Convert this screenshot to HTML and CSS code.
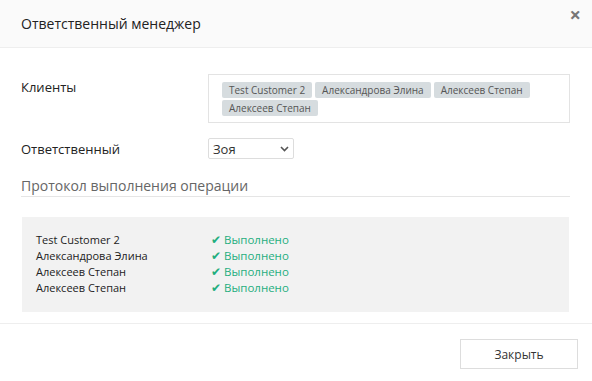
FILE: index.html
```html
<!DOCTYPE html>
<html lang="ru">
<head>
    <meta charset="UTF-8">
    <meta name="viewport" content="width=device-width, initial-scale=1.0">
    <title>Ответственный менеджер</title>
    <link rel="stylesheet" href="styles.css">
</head>
<body>
    <div class="modal">
        <div class="modal-header">
            <h3>Ответственный менеджер</h3>
            <span class="close">&times;</span>
        </div>
        <div class="modal-body">
            <div class="field">
                <label>Клиенты</label>
                <div class="tags">
                    <span class="tag">Test Customer 2</span>
                    <span class="tag">Александрова Элина</span>
                    <span class="tag">Алексеев Степан</span>
                    <span class="tag">Алексеев Степан</span>
                </div>
            </div>
            <div class="field field-select">
                <label>Ответственный</label>
                <div class="select">
                    <span>Зоя</span>
                    <svg width="9" height="6" viewBox="0 0 9 6"><path d="M1 1l3.5 3.5L8 1" fill="none" stroke="#555" stroke-width="1.6"/></svg>
                </div>
            </div>
            <h4 class="section-title">Протокол выполнения операции</h4>
            <div class="log">
                <div class="log-row"><span class="name">Test Customer 2</span><span class="status">&#10004; Выполнено</span></div>
                <div class="log-row"><span class="name">Александрова Элина</span><span class="status">&#10004; Выполнено</span></div>
                <div class="log-row"><span class="name">Алексеев Степан</span><span class="status">&#10004; Выполнено</span></div>
                <div class="log-row"><span class="name">Алексеев Степан</span><span class="status">&#10004; Выполнено</span></div>
            </div>
        </div>
        <div class="modal-footer">
            <button>Закрыть</button>
        </div>
    </div>
</body>
</html>
```

FILE: styles.css
```css
body {
    margin: 0;
    background: #fff;
    font-family: "Open Sans", "Noto Sans", sans-serif;
    color: #333;
}
.modal {
    width: 592px;
}
.modal-header {
    height: 47px;
    padding: 0 11px 0 21px;
    background: #fafafa;
    border-bottom: 1px solid #eee;
    display: flex;
    justify-content: space-between;
    align-items: center;
}
.modal-header h3 {
    margin: 0;
    font-size: 14px;
    font-weight: normal;
    color: #222;
}
.close {
    align-self: flex-start;
    margin-top: 1px;
    font-size: 20px;
    font-weight: bold;
    color: #777;
}
.modal-body {
    padding: 26px 22px 0 21px;
}
.field {
    display: flex;
}
.field label {
    width: 187px;
    font-size: 13px;
    color: #222;
    padding-top: 4px;
}
.tags {
    flex: 1;
    border: 1px solid #e3e3e3;
    padding: 7px 12px 6px 13px;
    display: flex;
    flex-wrap: wrap;
    gap: 2px 3px;
}
.tag {
    background: #d6dcdf;
    color: #555;
    font-size: 10px;
    line-height: 16px;
    padding: 0 7px;
    border-radius: 2px;
}
.field-select {
    margin-top: 15px;
    align-items: center;
}
.field-select label {
    padding-top: 0;
}
.select {
    width: 76px;
    height: 19px;
    border: 1px solid #ddd;
    border-radius: 2px;
    padding: 0 4px;
    display: flex;
    justify-content: space-between;
    align-items: center;
    font-size: 13px;
    color: #333;
}
.section-title {
    margin: 18px 0 0;
    padding-bottom: 1px;
    font-size: 14px;
    font-weight: normal;
    line-height: 18px;
    color: #666;
    border-bottom: 1px solid #e5e5e5;
}
.log {
    margin: 20px 1px 0;
    background: #f2f2f2;
    padding: 15px 14px 16px;
}
.log-row {
    display: flex;
    font-size: 11px;
    line-height: 16px;
    color: #222;
}
.log-row .name {
    width: 175px;
}
.status {
    color: #1fae7e;
    font-size: 11.5px;
}
.modal-footer {
    margin-top: 11px;
    border-top: 1px solid #eee;
    padding: 15px 14px 0;
    display: flex;
    justify-content: flex-end;
}
button {
    width: 118px;
    height: 30px;
    background: #fff;
    border: 1px solid #ddd;
    font-family: "Open Sans", sans-serif;
    font-size: 12px;
    color: #333;
    cursor: pointer;
}
```
